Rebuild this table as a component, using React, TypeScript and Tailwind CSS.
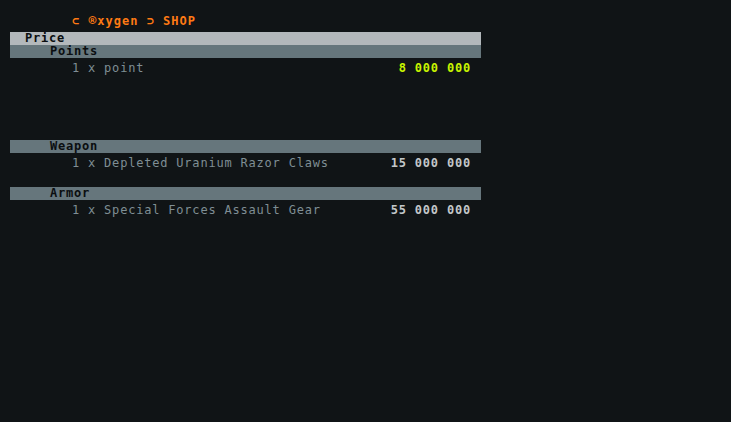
import React from "react";

const font = { fontFamily: '"DejaVu Sans Mono", "Liberation Mono", monospace' };

function Section({ title, items }: { title: string; items: { name: string; price: string; color: string }[] }) {
  return (
    <div>
      <div className="h-[13px] bg-[#66767c] pl-[40px] text-[12px] leading-[13px] font-bold text-[#0b0e10] tracking-[0.8px]">{title}</div>
      {items.map((it, i) => (
        <div key={i} className="h-[18px] flex items-center justify-between pl-[62px] pr-[10px] pt-[1px] text-[12px] tracking-[0.8px]">
          <span className="text-[#7f8e94]">{it.name}</span>
          <span className="font-bold" style={{ color: it.color }}>{it.price}</span>
        </div>
      ))}
    </div>
  );
}

export default function App() {
  return (
    <div className="w-[731px] h-[422px] bg-[#101416] overflow-hidden" style={font}>
      <div className="h-[32px] pl-[72px] pt-[14px] text-[12px] leading-[14px] font-bold text-[#ff7a14] tracking-[1px]">
        ⊂ <span className="text-[13px]">®</span>xygen ⊃ SHOP
      </div>
      <div className="ml-[10px] w-[471px]">
        <div className="h-[13px] bg-[#b3b8bb] pl-[15px] text-[12px] leading-[13px] font-bold text-[#0b0e10] tracking-[0.8px]">Price</div>
        <Section title="Points" items={[{ name: "1 x point", price: "8 000 000", color: "#c8f500" }]} />
        <div className="h-[64px]" />
        <Section title="Weapon" items={[{ name: "1 x Depleted Uranium Razor Claws", price: "15 000 000", color: "#c3c7c9" }]} />
        <div className="h-[16px]" />
        <Section title="Armor" items={[{ name: "1 x Special Forces Assault Gear", price: "55 000 000", color: "#c3c7c9" }]} />
      </div>
    </div>
  );
}
